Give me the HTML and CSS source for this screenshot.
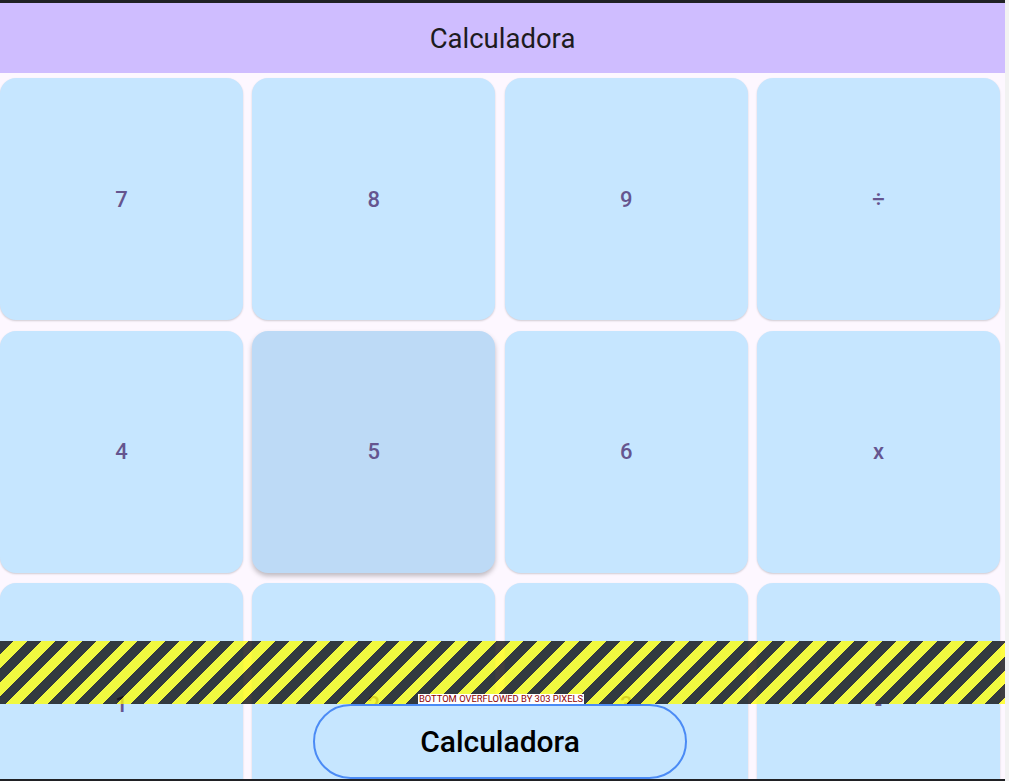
FILE: index.html
```html
<!DOCTYPE html>
<html lang="pt">
<head>
<meta charset="UTF-8">
<meta name="viewport" content="width=device-width, initial-scale=1.0">
<title>Calculadora</title>
<link rel="stylesheet" href="styles.css">
</head>
<body>
<div class="tela">
    <header class="barra">
        <h1>Calculadora</h1>
    </header>
    <main class="corpo">
        <div class="teclado">
            <button class="tecla">7</button>
            <button class="tecla">8</button>
            <button class="tecla">9</button>
            <button class="tecla">÷</button>
            <button class="tecla">4</button>
            <button class="tecla ativa">5</button>
            <button class="tecla">6</button>
            <button class="tecla">x</button>
            <button class="tecla">1</button>
            <button class="tecla">2</button>
            <button class="tecla">3</button>
            <button class="tecla">-</button>
        </div>
        <!-- faixa de aviso do overflow -->
        <div class="faixa">
            <span class="aviso">BOTTOM OVERFLOWED BY 303 PIXELS</span>
        </div>
        <button class="botao-fundo">Calculadora</button>
    </main>
</div>
</body>
</html>
```

FILE: styles.css
```css
*{margin:0;padding:0;box-sizing:border-box;}
body
{
    background: #f2f2f2;
    font-family: Roboto, "Liberation Sans", sans-serif;
}
.tela
{
    width: 1005px;
    height: 781px;
    border-top: 3px solid #202124;
    border-bottom: 2px solid #202124;
    background: #fdf7ff;
    display: flex;
    flex-direction: column;
    overflow: hidden;
}
.barra
{
    height: 70px;
    flex-shrink: 0;
    background: #cfbdff;
    display: flex;
    align-items: center;
    justify-content: center;
}
.barra h1
{
    font-size: 27.5px;
    font-weight: 400;
    color: #1d1b20;
}
.corpo
{
    position: relative;
    flex: 1;
    overflow: hidden;
    padding-top: 5px;
}
.teclado
{
    display: grid;
    grid-template-columns: repeat(4, 243px);
    grid-auto-rows: 242px;
    column-gap: 9.33px;
    row-gap: 10.5px;
}
.tecla
{
    border: none;
    border-radius: 16px;
    background: #c6e6ff;
    color: #65558f;
    font-family: Roboto, "Liberation Sans", sans-serif;
    font-size: 22px;
    font-weight: 500;
    box-shadow: 0 1px 2px rgba(0,0,0,0.18);
}
.ativa
{
    background: #bddaf6;
    box-shadow: 0 3px 5px rgba(0,0,0,0.25);
}
.faixa
{
    position: absolute;
    left: 0;
    top: 568px;
    width: 100%;
    height: 63px;
    background: repeating-linear-gradient(135deg,
        rgba(0,0,0,0.75) 0 9.75px,
        rgba(255,255,0,0.75) 9.75px 19.5px);
    display: flex;
    justify-content: center;
    align-items: flex-end;
}
.aviso
{
    background: #fff;
    color: #900000;
    font-size: 9.4px;
    line-height: 10px;
    padding: 0 1px;
    margin-left: -3px;
}
.botao-fundo
{
    position: absolute;
    left: 313px;
    top: 631px;
    width: 374px;
    height: 75px;
    border: 2px solid #4b8bf5;
    border-radius: 38px;
    background: #c6e6ff;
    color: #000;
    font-family: Roboto, "Liberation Sans", sans-serif;
    font-size: 30px;
    font-weight: 500;
}
```
